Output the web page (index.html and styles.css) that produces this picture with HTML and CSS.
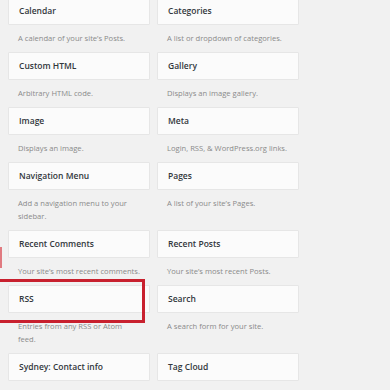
FILE: index.html
```html
<!DOCTYPE html>
<html>
<head>
<meta charset="utf-8">
<link rel="stylesheet" href="styles.css">
</head>
<body>
<div class="grid">
  <div class="widget"><div class="card">Calendar</div><p class="desc">A calendar of your site’s Posts.</p></div>
  <div class="widget"><div class="card">Categories</div><p class="desc">A list or dropdown of categories.</p></div>
  <div class="widget"><div class="card">Custom HTML</div><p class="desc">Arbitrary HTML code.</p></div>
  <div class="widget"><div class="card">Gallery</div><p class="desc">Displays an image gallery.</p></div>
  <div class="widget"><div class="card">Image</div><p class="desc">Displays an image.</p></div>
  <div class="widget"><div class="card">Meta</div><p class="desc">Login, RSS, &amp; WordPress.org links.</p></div>
  <div class="widget"><div class="card">Navigation Menu</div><p class="desc">Add a navigation menu to your sidebar.</p></div>
  <div class="widget"><div class="card">Pages</div><p class="desc">A list of your site’s Pages.</p></div>
  <div class="widget"><div class="card">Recent Comments</div><p class="desc">Your site’s most recent comments.</p></div>
  <div class="widget"><div class="card">Recent Posts</div><p class="desc">Your site’s most recent Posts.</p></div>
  <div class="widget"><div class="card">RSS</div><p class="desc">Entries from any RSS or Atom<br>feed.</p></div>
  <div class="widget"><div class="card">Search</div><p class="desc">A search form for your site.</p></div>
  <div class="widget"><div class="card">Sydney: Contact info</div><p class="desc">&nbsp;</p></div>
  <div class="widget"><div class="card">Tag Cloud</div><p class="desc">&nbsp;</p></div>
</div>
<div class="mark"></div>
<div class="redbox"></div>
</body>
</html>
```
FILE: styles.css
```css
html, body {
  margin: 0;
  padding: 0;
  background: #f1f1f1;
  overflow: hidden;
}
body {
  width: 390px;
  height: 390px;
  position: relative;
  font-family: "Open Sans", "Noto Sans", sans-serif;
}
.grid {
  display: grid;
  grid-template-columns: 142px 142px;
  column-gap: 7px;
  align-items: start;
  padding: 0 0 0 8px;
  margin-top: -3px;
}
.card {
  background: #fbfbfb;
  border: 1px solid #e6e6e6;
  border-radius: 1px;
  box-sizing: content-box;
  height: 26px;
  line-height: 26px;
  padding: 0 10px;
  font-size: 8.5px;
  font-weight: 600;
  color: #32373c;
  white-space: nowrap;
}
.desc {
  margin: 0;
  padding: 7px 10px 7px 10px;
  font-size: 7.6px;
  line-height: 13px;
  color: #8a8a8a;
}
.mark {
  position: absolute;
  left: 0;
  top: 247px;
  width: 2px;
  height: 21px;
  background: #e07a80;
}
.redbox {
  position: absolute;
  left: -10px;
  top: 279px;
  width: 149px;
  height: 38px;
  border: 3.5px solid #c8202e;
}
```
